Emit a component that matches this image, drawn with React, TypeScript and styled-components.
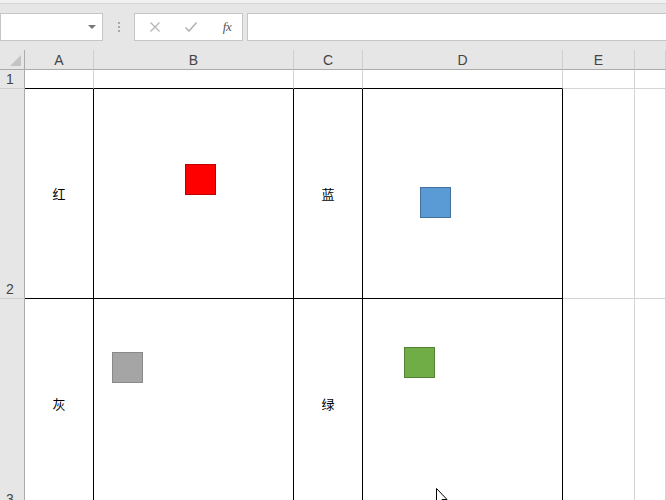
import React from "react";
import styled, { createGlobalStyle } from "styled-components";

const Global = createGlobalStyle`
  html, body { margin: 0; padding: 0; background: #ffffff; overflow: hidden; }
  body { width: 666px; height: 500px; font-family: "Liberation Sans", Arial, sans-serif; }
`;

const Page = styled.div`
  width: 666px;
  height: 500px;
  overflow: hidden;
  position: relative;
  background: #ffffff;
`;

const Toolbar = styled.div`
  height: 50px;
  background: #e6e6e6;
  border-top: 3px solid #f1f1f1;
  box-shadow: inset 0 1px 0 #d6d6d6;
  display: flex;
  align-items: flex-start;
  padding-top: 10px;
  box-sizing: border-box;
`;

const NameBox = styled.div`
  width: 103px;
  height: 28px;
  box-sizing: border-box;
  background: #fff;
  border: 1px solid #c6c6c6;
  display: flex;
  align-items: center;
  justify-content: flex-end;
  padding-right: 6px;
`;

const Arrow = styled.div`
  width: 0;
  height: 0;
  border-left: 4px solid transparent;
  border-right: 4px solid transparent;
  border-top: 4px solid #777;
`;

const Dots = styled.div`
  width: 31px;
  height: 28px;
  display: flex;
  flex-direction: column;
  align-items: center;
  justify-content: center;
  gap: 2px;
`;

const Dot = styled.span`
  width: 2px;
  height: 2px;
  background: #a8a8a8;
`;

const ButtonBox = styled.div`
  width: 109px;
  height: 28px;
  box-sizing: border-box;
  background: #fff;
  border: 1px solid #c6c6c6;
  display: flex;
  align-items: center;
  padding-left: 11px;
  gap: 18px;
`;

const IconSlot = styled.span`
  width: 18px;
  height: 18px;
  display: flex;
  align-items: center;
  justify-content: center;
`;

const Fx = styled.span`
  font-family: "Liberation Serif", "Times New Roman", serif;
  font-style: italic;
  font-size: 13px;
  color: #555;
  letter-spacing: -0.5px;
`;

const FormulaInput = styled.div`
  flex: 1;
  margin-left: 4px;
  height: 28px;
  box-sizing: border-box;
  background: #fff;
  border: 1px solid #c6c6c6;
  border-right: none;
`;

const Sheet = styled.div`
  display: grid;
  grid-template-columns: 25px 69px 200px 69px 200px 72px 1fr;
  grid-template-rows: 20px 19px 210px 210px;
`;

const Corner = styled.div`
  background: #e6e6e6;
  box-sizing: border-box;
  border-right: 1px solid #ababab;
  border-bottom: 1px solid #ababab;
  position: relative;
  overflow: hidden;
`;

const CornerTri = styled.div`
  position: absolute;
  right: 3px;
  bottom: 3px;
  width: 0;
  height: 0;
  border-left: 11px solid transparent;
  border-bottom: 11px solid #c3c3c3;
`;

const ColHead = styled.div`
  background: #e6e6e6;
  box-sizing: border-box;
  border-bottom: 1px solid #ababab;
  border-right: 1px solid #cfcfcf;
  display: flex;
  align-items: center;
  justify-content: center;
  font-size: 14px;
  color: #444;
  padding-top: 1px;
`;

const RowHead = styled.div`
  background: #e6e6e6;
  box-sizing: border-box;
  border-right: 1px solid #ababab;
  border-bottom: 1px solid #cfcfcf;
  display: flex;
  align-items: flex-end;
  justify-content: center;
  padding-right: 4px;
  font-size: 14px;
  color: #444;
  line-height: 18px;
`;

const Cell = styled.div<{ $boxed?: boolean; $topOfBox?: boolean }>`
  position: relative;
  box-sizing: border-box;
  background: #fff;
  border-right: 1px solid ${(p) => (p.$boxed ? "#000" : "#d4d4d4")};
  border-bottom: 1px solid ${(p) => (p.$boxed || p.$topOfBox ? "#000" : "#d4d4d4")};
  display: flex;
  align-items: center;
  justify-content: center;
  font-family: "Noto Sans CJK SC", "Noto Sans", sans-serif;
  font-size: 13px;
  color: #000;
`;

const Swatch = styled.div<{ $fill: string; $line: string; $x: number; $y: number }>`
  position: absolute;
  left: ${(p) => p.$x}px;
  top: ${(p) => p.$y}px;
  width: 31px;
  height: 31px;
  box-sizing: border-box;
  background: ${(p) => p.$fill};
  border: 1px solid ${(p) => p.$line};
`;

const Cursor = styled.svg`
  position: absolute;
  left: 436px;
  top: 488px;
`;

const cols = ["A", "B", "C", "D", "E", ""];

type Shape = { fill: string; line: string; x: number; y: number };

const rows: { num: string; label1: string; label2: string; s1?: Shape; s2?: Shape }[] = [
  {
    num: "2",
    label1: "红",
    label2: "蓝",
    s1: { fill: "#ff0000", line: "#c00000", x: 91, y: 75 },
    s2: { fill: "#5b9bd5", line: "#41719c", x: 57, y: 98 },
  },
  {
    num: "3",
    label1: "灰",
    label2: "绿",
    s1: { fill: "#a5a5a5", line: "#8a8a8a", x: 18, y: 53 },
    s2: { fill: "#70ad47", line: "#548235", x: 41, y: 48 },
  },
];

export default function App() {
  return (
    <Page>
      <Global />
      <Toolbar>
        <NameBox>
          <Arrow />
        </NameBox>
        <Dots>
          <Dot />
          <Dot />
          <Dot />
        </Dots>
        <ButtonBox>
          <IconSlot>
            <svg width="12" height="12" viewBox="0 0 12 12">
              <path d="M1.5 1.5 L10.5 10.5 M10.5 1.5 L1.5 10.5" stroke="#b4b4b4" strokeWidth="1.2" fill="none" />
            </svg>
          </IconSlot>
          <IconSlot>
            <svg width="14" height="12" viewBox="0 0 14 12">
              <path d="M1.5 6.5 L5 10 L12.5 1.5" stroke="#b4b4b4" strokeWidth="1.6" fill="none" />
            </svg>
          </IconSlot>
          <IconSlot>
            <Fx>fx</Fx>
          </IconSlot>
        </ButtonBox>
        <FormulaInput />
      </Toolbar>
      <Sheet>
        <Corner>
          <CornerTri />
        </Corner>
        {cols.map((c, i) => (
          <ColHead key={"h" + i}>{c}</ColHead>
        ))}
        <RowHead>1</RowHead>
        {cols.map((_, i) => (
          <Cell key={"r1" + i} $topOfBox={i < 4} />
        ))}
        {rows.map((r) => (
          <React.Fragment key={r.num}>
            <RowHead>{r.num}</RowHead>
            <Cell $boxed>{r.label1}</Cell>
            <Cell $boxed>
              {r.s1 && <Swatch $fill={r.s1.fill} $line={r.s1.line} $x={r.s1.x} $y={r.s1.y} />}
            </Cell>
            <Cell $boxed>{r.label2}</Cell>
            <Cell $boxed>
              {r.s2 && <Swatch $fill={r.s2.fill} $line={r.s2.line} $x={r.s2.x} $y={r.s2.y} />}
            </Cell>
            <Cell />
            <Cell />
          </React.Fragment>
        ))}
      </Sheet>
      <Cursor width="14" height="20" viewBox="0 0 14 20">
        <path d="M0.5 0.5 L0.5 16 L4 12.5 L6.5 18.5 L8.5 17.5 L6 11.5 L11 11.5 Z" fill="#fff" stroke="#000" strokeWidth="1" />
      </Cursor>
    </Page>
  );
}
